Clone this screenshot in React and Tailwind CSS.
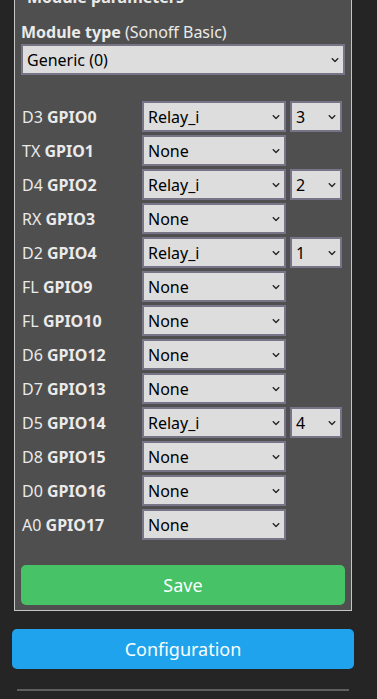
import React from 'react'

const rows = [
  { pin: 'D3', gpio: 'GPIO0', value: 'Relay_i', index: '3' },
  { pin: 'TX', gpio: 'GPIO1', value: 'None' },
  { pin: 'D4', gpio: 'GPIO2', value: 'Relay_i', index: '2' },
  { pin: 'RX', gpio: 'GPIO3', value: 'None' },
  { pin: 'D2', gpio: 'GPIO4', value: 'Relay_i', index: '1' },
  { pin: 'FL', gpio: 'GPIO9', value: 'None' },
  { pin: 'FL', gpio: 'GPIO10', value: 'None' },
  { pin: 'D6', gpio: 'GPIO12', value: 'None' },
  { pin: 'D7', gpio: 'GPIO13', value: 'None' },
  { pin: 'D5', gpio: 'GPIO14', value: 'Relay_i', index: '4' },
  { pin: 'D8', gpio: 'GPIO15', value: 'None' },
  { pin: 'D0', gpio: 'GPIO16', value: 'None' },
  { pin: 'A0', gpio: 'GPIO17', value: 'None' },
]

function Chevron() {
  return (
    <svg
      className="pointer-events-none absolute right-[6px] top-1/2 -translate-y-1/2"
      width="8"
      height="5"
      viewBox="0 0 8 5"
      fill="none"
    >
      <path d="M0.8 0.8 L4 4 L7.2 0.8" stroke="#222" strokeWidth="1.3" />
    </svg>
  )
}

function Select({ value, className }) {
  return (
    <div className={'relative ' + className}>
      <select
        defaultValue={value}
        className="h-full w-full appearance-none border-2 border-[#777487] bg-[#dddddd] pl-[4px] text-[16px] text-black outline-none"
      >
        <option value={value}>{value}</option>
      </select>
      <Chevron />
    </div>
  )
}

export default function App() {
  return (
    <div
      className="min-h-screen overflow-hidden bg-[#252525] text-[#eaeaea]"
      style={{ fontFamily: '"Noto Sans", "Open Sans", sans-serif' }}
    >
      <div className="ml-[14px] -mt-[14px] w-[338px] border border-[#c5c5c5] bg-[#4f4f4f] px-[6px] pb-[5px]">
        <div className="pl-[6px] text-[16px] font-bold leading-[20px]">Module parameters</div>

        <div className="mt-[15px] text-[16px] leading-[20px]">
          <b>Module type</b> (Sonoff Basic)
        </div>
        <Select value="Generic (0)" className="mt-[2px] h-[31px] w-full" />

        <div className="mt-[26px] flex flex-col gap-[3px]">
          {rows.map((r) => (
            <div key={r.gpio} className="flex h-[31px] items-center">
              <div className="w-[121px] pl-[1px] text-[16px]">
                {r.pin} <b>{r.gpio}</b>
              </div>
              <Select value={r.value} className="h-full w-[144px]" />
              {r.index && <Select value={r.index} className="ml-[4px] h-full w-[52px]" />}
            </div>
          ))}
        </div>

        <button className="mt-[25px] h-[40px] w-full rounded-[5px] bg-[#47c266] text-[18px] text-[#faffff]">
          Save
        </button>
      </div>

      <button className="ml-[12px] mt-[18px] h-[40px] w-[342px] rounded-[5px] bg-[#1fa3ec] text-[18px] text-[#faffff]">
        Configuration
      </button>

      <div className="ml-[17px] mt-[20px] h-[2px] w-[332px] bg-[#5e5e5e]" />
    </div>
  )
}
